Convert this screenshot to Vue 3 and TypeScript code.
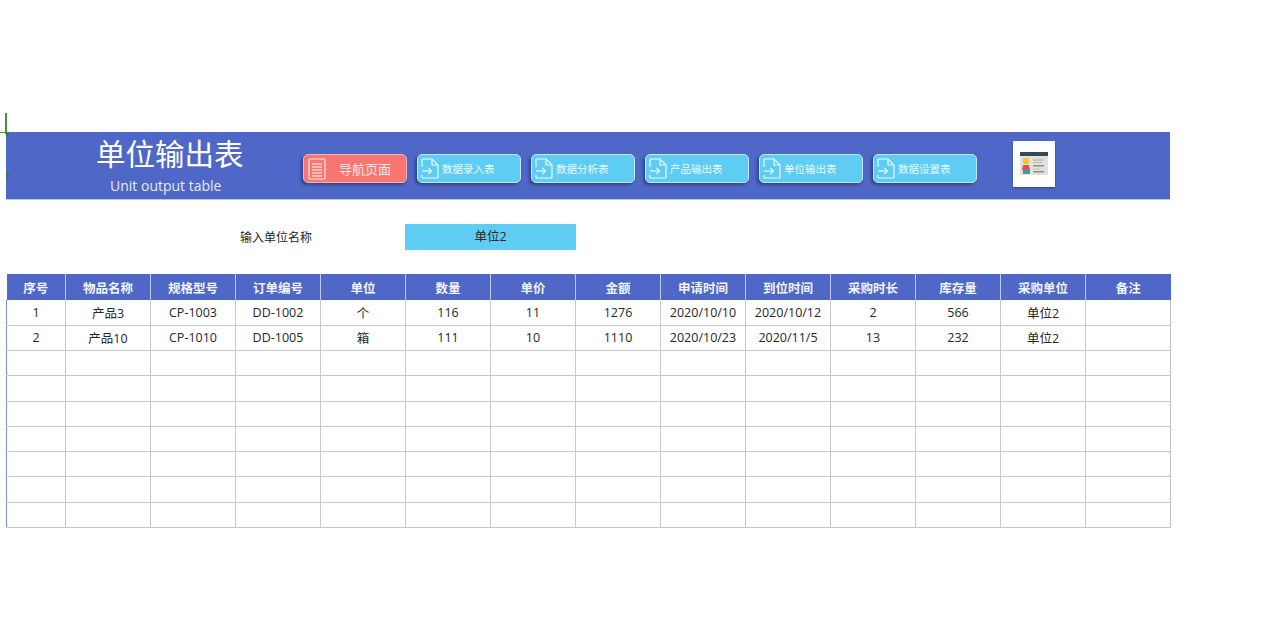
<template>
  <div class="page">
    <div class="marks">
      <span class="mark-line"></span>
      <span class="mark-tick"></span>
      <span class="mark-dot top"></span>
      <span class="mark-dot bottom"></span>
    </div>

    <div class="banner">
      <div class="titles">
        <h1>单位输出表</h1>
        <p>Unit output table</p>
      </div>

      <div class="nav">
        <button class="nav-btn home">
          <svg width="18" height="22" viewBox="0 0 18 22" fill="none" stroke="currentColor" stroke-width="1.2">
            <rect x="1" y="1" width="16" height="20" rx="1"></rect>
            <line x1="4" y1="6" x2="14" y2="6"></line>
            <line x1="4" y1="9" x2="14" y2="9"></line>
            <line x1="4" y1="12" x2="14" y2="12"></line>
            <line x1="4" y1="15" x2="14" y2="15"></line>
            <line x1="4" y1="18" x2="14" y2="18"></line>
          </svg>
          <span>导航页面</span>
        </button>
        <button class="nav-btn" v-for="item in navItems" :key="item">
          <svg width="18" height="21" viewBox="0 0 18 21" fill="none" stroke="currentColor" stroke-width="1.2">
            <path d="M1 9V2a1 1 0 0 1 1-1h9l6 6v12a1 1 0 0 1-1 1H2a1 1 0 0 1-1-1v-2"></path>
            <path d="M11 1v6h6"></path>
            <path d="M1 13h9"></path>
            <path d="m7.500 10 3 3-3 3"></path>
          </svg>
          <span>{{ item }}</span>
        </button>
      </div>

      <div class="logo-card">
        <svg width="28" height="24" viewBox="0 0 28 24">
          <rect y="0" width="28" height="23" fill="#e2e1dd"></rect>
          <rect y="0" width="28" height="4" fill="#34495a"></rect>
          <circle cx="6" cy="9" r="3.200" fill="#f2c230"></circle>
          <path d="M3 13h6l1 5H2z" fill="#d9534f"></path>
          <rect x="3" y="18" width="7" height="4" fill="#3aa0a0"></rect>
          <rect x="13" y="7.500" width="11" height="1" fill="#a8a8a4"></rect>
          <rect x="13" y="10" width="9" height="1" fill="#b8b8b4"></rect>
          <rect x="13" y="13" width="11" height="1.500" fill="#8f8f8b"></rect>
          <rect x="13" y="16.500" width="8" height="1" fill="#c2c2be"></rect>
          <rect x="13" y="19" width="11" height="1.500" fill="#8f8f8b"></rect>
        </svg>
      </div>
    </div>

    <div class="query">
      <span class="query-label">输入单位名称</span>
      <div class="query-value">单位2</div>
    </div>

    <table class="grid">
      <colgroup>
        <col class="first" />
        <col v-for="h in headers.slice(1)" :key="h" />
      </colgroup>
      <thead>
        <tr>
          <th v-for="h in headers" :key="h">{{ h }}</th>
        </tr>
      </thead>
      <tbody>
        <tr v-for="(row, i) in rows" :key="i">
          <td v-for="(cell, j) in row" :key="j">{{ cell }}</td>
        </tr>
      </tbody>
    </table>
  </div>
</template>

<script setup lang="ts">
const navItems = ['数据录入表', '数据分析表', '产品输出表', '单位输出表', '数据设置表']

const headers = [
  '序号', '物品名称', '规格型号', '订单编号', '单位', '数量', '单价',
  '金额', '申请时间', '到位时间', '采购时长', '库存量', '采购单位', '备注',
]

const filled: string[][] = [
  ['1', '产品3', 'CP-1003', 'DD-1002', '个', '116', '11', '1276', '2020/10/10', '2020/10/12', '2', '566', '单位2', ''],
  ['2', '产品10', 'CP-1010', 'DD-1005', '箱', '111', '10', '1110', '2020/10/23', '2020/11/5', '13', '232', '单位2', ''],
]

const rows: string[][] = [
  ...filled,
  ...Array.from({ length: 7 }, () => headers.map(() => '')),
]
</script>

<style scoped>
.page {
  position: relative;
  width: 1280px;
  height: 640px;
  padding: 132px 0 0 6px;
  box-sizing: border-box;
  background: #fff;
  font-family: "Open Sans", "Noto Sans CJK SC", sans-serif;
  color: #262626;
  overflow: hidden;
}

.marks {
  position: absolute;
  left: 0;
  top: 112px;
  width: 12px;
  height: 70px;
}

.mark-line {
  position: absolute;
  left: 5px;
  top: 1px;
  width: 2px;
  height: 21px;
  background: #4e8f35;
}

.mark-tick {
  position: absolute;
  left: 0;
  top: 20px;
  width: 5px;
  height: 1px;
  background: #4e8f35;
}

.mark-dot {
  position: absolute;
  left: 6px;
  width: 4px;
  height: 4px;
  background: #2e7d32;
}

.mark-dot.top {
  top: 21px;
  clip-path: polygon(0 0, 100% 0, 0 100%);
}

.mark-dot.bottom {
  top: 62px;
  clip-path: polygon(0 0, 100% 0, 0 100%);
}

.banner {
  display: flex;
  align-items: flex-start;
  width: 1164px;
  height: 67px;
  background: #4f67c6;
  border-bottom: 1px solid #b9c4ec;
  box-sizing: content-box;
}

.titles {
  width: 297px;
  flex-shrink: 0;
  display: flex;
  flex-direction: column;
  color: #fff;
}

.titles h1 {
  margin: 3px 0 0;
  padding-left: 90px;
  font-size: 29.500px;
  line-height: 38px;
  font-weight: 400;
}

.titles p {
  margin: 3px 0 0;
  padding-left: 104px;
  font-size: 14px;
  line-height: 20px;
  color: #e6eafa;
}

.nav {
  display: flex;
  gap: 10px;
  margin-top: 22px;
}

.nav-btn {
  display: flex;
  align-items: center;
  gap: 3px;
  width: 104px;
  height: 29px;
  padding: 0 0 0 3px;
  box-sizing: border-box;
  border: 1px solid #c3e6f8;
  border-radius: 5px;
  background: #5fcdf3;
  box-shadow: -2px 2px 3px rgba(30, 40, 90, 0.55);
  color: #eafaff;
  font-family: inherit;
  font-size: 10.500px;
}

.nav-btn.home {
  gap: 13px;
  padding-left: 4px;
  border-color: #eeb4bb;
  background: #f8766f;
  color: #fde9e6;
  font-size: 13px;
}

.logo-card {
  display: flex;
  align-items: center;
  justify-content: center;
  width: 42px;
  height: 46px;
  margin: 9px 0 0 36px;
  background: #fff;
  box-shadow: 0 1px 2px rgba(30, 40, 90, 0.5);
}

.query {
  display: flex;
  align-items: center;
  height: 26px;
  margin-top: 24px;
}

.query-label {
  width: 165px;
  margin-left: 234px;
  font-size: 12px;
  flex-shrink: 0;
}

.query-value {
  width: 171px;
  height: 26px;
  line-height: 26px;
  text-align: center;
  background: #5fcdf3;
  font-size: 12.500px;
}

.grid {
  width: 1164px;
  margin-top: 24px;
  border-collapse: collapse;
  table-layout: fixed;
}

.grid col {
  width: 85px;
}

.grid col.first {
  width: 59px;
}

.grid th {
  height: 26px;
  padding: 0;
  background: #4f67c6;
  border-left: 1px solid #c0cbef;
  color: #f2f4fc;
  font-size: 12.500px;
  font-weight: 700;
}

.grid th:first-child {
  border-left: none;
}

.grid td {
  height: 25.250px;
  padding: 0;
  box-sizing: border-box;
  border: 1px solid #c8c8cc;
  border-top: none;
  text-align: center;
  font-size: 12.500px;
}

.grid td:first-child {
  border-left: 1px solid #7a8ccf;
}

.grid td:last-child {
  border-right: 1px solid #bdbdc2;
}
</style>

<style>
html,
body {
  margin: 0;
  background: #fff;
}
</style>
